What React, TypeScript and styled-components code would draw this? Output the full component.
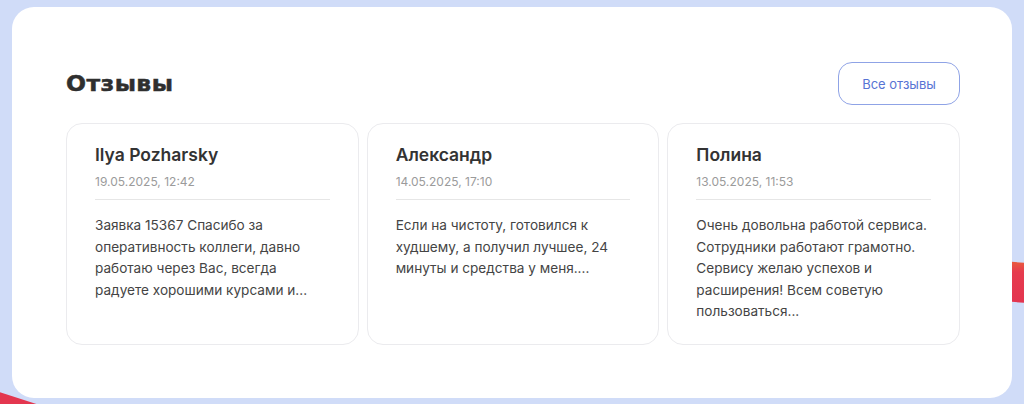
import React from "react";
import styled, { createGlobalStyle } from "styled-components";

const GlobalStyle = createGlobalStyle`
  * { box-sizing: border-box; }
  html, body { margin: 0; padding: 0; }
  body {
    background: #d0dcf8;
    font-family: Inter, "Noto Sans", sans-serif;
    overflow: hidden;
  }
`;

const Page = styled.div`
  position: relative;
  width: 1024px;
  height: 404px;
  padding: 7px 12px 6px 12px;
  overflow: hidden;
`;

/* decorative ribbons peeking out from behind the panel */
const Ribbon = styled.div<{ $side: "right" | "left" }>`
  position: absolute;
  z-index: 0;
  ${({ $side }) =>
    $side === "right"
      ? `
    right: -20px;
    top: 262px;
    width: 60px;
    height: 40px;
    background: linear-gradient(175deg, #e9623a 0%, #e63b4e 28%, #e3344f 100%);
    transform: skewY(5deg);
  `
      : `
    left: -30px;
    bottom: -14px;
    width: 80px;
    height: 22px;
    background: #e3364f;
    transform: rotate(18deg);
  `}
`;

const Panel = styled.section`
  position: relative;
  z-index: 1;
  height: 391px;
  background: #ffffff;
  border-radius: 22px;
  padding: 55px 52px 0 54px;
  display: flex;
  flex-direction: column;
  gap: 18px;
`;

const Header = styled.div`
  display: flex;
  align-items: center;
  justify-content: space-between;
  height: 43px;
`;

const Title = styled.h2`
  margin: 0;
  font-family: "DejaVu Sans", sans-serif;
  font-weight: 700;
  font-size: 21px;
  letter-spacing: 0.4px;
  color: #2f2f2f;
  -webkit-text-stroke: 0.5px #2f2f2f;
  transform: scaleX(1.12);
  transform-origin: left center;
`;

const OutlineButton = styled.button`
  height: 43px;
  width: 122px;
  border: 1px solid #8fa3e6;
  border-radius: 14px;
  background: #ffffff;
  color: #5774d4;
  font-family: Inter, "Noto Sans", sans-serif;
  font-size: 13px;
  cursor: pointer;
`;

const Grid = styled.div`
  display: grid;
  grid-template-columns: repeat(3, 1fr);
  gap: 8px;
`;

const Card = styled.article`
  border: 1px solid #ebebee;
  border-radius: 16px;
  padding: 19px 28px 20px 28px;
  height: 222px;
  display: flex;
  flex-direction: column;
`;

const Name = styled.div`
  font-weight: 600;
  font-size: 17.5px;
  line-height: 24px;
  color: #333333;
`;

const Date = styled.div`
  margin-top: 7px;
  font-size: 12px;
  line-height: 16px;
  color: #9b9b9b;
  padding-bottom: 9px;
  border-bottom: 1px solid #e6e6e6;
`;

const Text = styled.p`
  margin: 15px 0 0 0;
  font-size: 13.6px;
  line-height: 21.6px;
  color: #444444;
`;

const reviews = [
  {
    name: "Ilya Pozharsky",
    date: "19.05.2025, 12:42",
    text: "Заявка 15367 Спасибо за оперативность коллеги, давно работаю через Вас, всегда радуете хорошими курсами и...",
  },
  {
    name: "Александр",
    date: "14.05.2025, 17:10",
    text: "Если на чистоту, готовился к худшему, а получил лучшее, 24 минуты и средства у меня....",
  },
  {
    name: "Полина",
    date: "13.05.2025, 11:53",
    text: "Очень довольна работой сервиса. Сотрудники работают грамотно. Сервису желаю успехов и расширения! Всем советую пользоваться...",
  },
];

export default function App() {
  return (
    <>
      <GlobalStyle />
      <Page>
        <Ribbon $side="right" />
        <Ribbon $side="left" />
        <Panel>
          <Header>
            <Title>Отзывы</Title>
            <OutlineButton>Все отзывы</OutlineButton>
          </Header>
          <Grid>
            {reviews.map((r) => (
              <Card key={r.name}>
                <Name>{r.name}</Name>
                <Date>{r.date}</Date>
                <Text>{r.text}</Text>
              </Card>
            ))}
          </Grid>
        </Panel>
      </Page>
    </>
  );
}
